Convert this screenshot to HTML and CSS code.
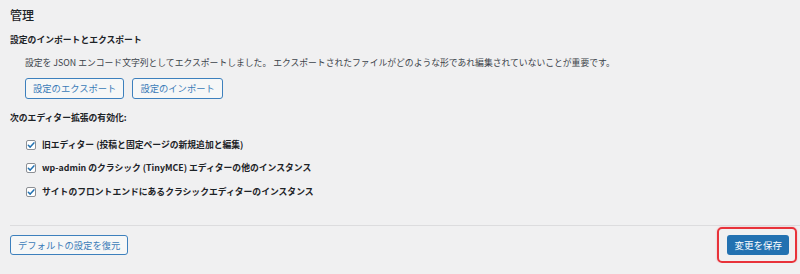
FILE: index.html
```html
<!DOCTYPE html>
<html lang="ja">
<head>
<meta charset="utf-8">
<title>管理</title>
<link rel="stylesheet" href="styles.css">
</head>
<body>
<div class="page">
  <h2 class="title">管理</h2>
  <h3 class="sec">設定のインポートとエクスポート</h3>
  <p class="desc">設定を JSON エンコード文字列としてエクスポートしました。 エクスポートされたファイルがどのような形であれ編集されていないことが重要です。</p>
  <div class="btn-row">
    <button class="btn">設定のエクスポート</button>
    <button class="btn">設定のインポート</button>
  </div>
  <h3 class="sec sec2">次のエディター拡張の有効化:</h3>
  <ul class="checks">
    <li class="check-row"><span class="cb"><svg viewBox="0 0 10 10" width="10" height="10"><path d="M2.3 5.2 L4.2 7.1 L7.9 2.9" fill="none" stroke="#2271b1" stroke-width="1.5" stroke-linecap="round" stroke-linejoin="round"/></svg></span><span class="lbl">旧エディター (投稿と固定ページの新規追加と編集)</span></li>
    <li class="check-row"><span class="cb"><svg viewBox="0 0 10 10" width="10" height="10"><path d="M2.3 5.2 L4.2 7.1 L7.9 2.9" fill="none" stroke="#2271b1" stroke-width="1.5" stroke-linecap="round" stroke-linejoin="round"/></svg></span><span class="lbl">wp-admin のクラシック (TinyMCE) エディターの他のインスタンス</span></li>
    <li class="check-row"><span class="cb"><svg viewBox="0 0 10 10" width="10" height="10"><path d="M2.3 5.2 L4.2 7.1 L7.9 2.9" fill="none" stroke="#2271b1" stroke-width="1.5" stroke-linecap="round" stroke-linejoin="round"/></svg></span><span class="lbl">サイトのフロントエンドにあるクラシックエディターのインスタンス</span></li>
  </ul>
  <div class="footer">
    <button class="btn btn-reset">デフォルトの設定を復元</button>
    <div class="highlight">
      <button class="btn-primary">変更を保存</button>
    </div>
  </div>
</div>
</body>
</html>
```
FILE: styles.css
```css
html, body {
  margin: 0;
  padding: 0;
  background: #f0f0f1;
}
body {
  font-family: "Noto Sans CJK JP", "Noto Sans", sans-serif;
  color: #1d2327;
  font-size: 8.8px;
}
.page {
  padding-left: 10px;
}
.title {
  margin: 0;
  padding-top: 7px;
  font-size: 12px;
  line-height: 16px;
  font-weight: 500;
  color: #1d2327;
}
.sec {
  margin: 10px 0 0;
  font-size: 8.8px;
  line-height: 14px;
  font-weight: 700;
  color: #1d2327;
}
.sec2 {
  margin-top: 12px;
}
.desc {
  margin: 9px 0 0;
  padding-left: 15px;
  line-height: 14px;
  color: #3c434a;
}
.btn-row {
  display: flex;
  gap: 8px;
  margin-top: 8px;
  padding-left: 15px;
}
.btn {
  font-family: inherit;
  font-size: 9.3px;
  height: 21px;
  line-height: 19px;
  padding: 0 7px;
  border: 1px solid #3d80bd;
  border-radius: 3px;
  background: #f6f7f7;
  color: #3a7bb8;
  margin: 0;
}
.checks {
  list-style: none;
  margin: 7.75px 0 0;
  padding: 0 0 0 16px;
}
.check-row {
  display: flex;
  align-items: center;
  height: 23.5px;
}
.cb {
  display: flex;
  width: 10px;
  height: 10px;
  box-sizing: border-box;
  border: 1px solid #8c8f94;
  border-radius: 2px;
  background: #fff;
  align-items: center;
  justify-content: center;
  overflow: hidden;
}
.cb svg {
  display: block;
  flex: none;
}
.lbl {
  margin-left: 6px;
  font-weight: 700;
  color: #1d2327;
  line-height: 14px;
}
.footer {
  margin-top: 21.75px;
  border-top: 1px solid #dcdcde;
  padding-top: 1px;
  display: flex;
  align-items: center;
  justify-content: space-between;
}
.btn-reset {
  height: 20px;
  line-height: 18px;
}
.highlight {
  border: 2px solid #e8323a;
  border-radius: 5px;
  padding: 6px 6px 6px 8px;
  margin-right: 3px;
  box-shadow: 0 0 2px rgba(232, 50, 58, 0.35);
  display: flex;
}
.btn-primary {
  font-family: inherit;
  font-size: 9.5px;
  height: 20px;
  line-height: 20px;
  padding: 0 7px;
  border: 0;
  border-radius: 3px;
  background: #2271b1;
  color: #fff;
  margin: 0;
}
```
